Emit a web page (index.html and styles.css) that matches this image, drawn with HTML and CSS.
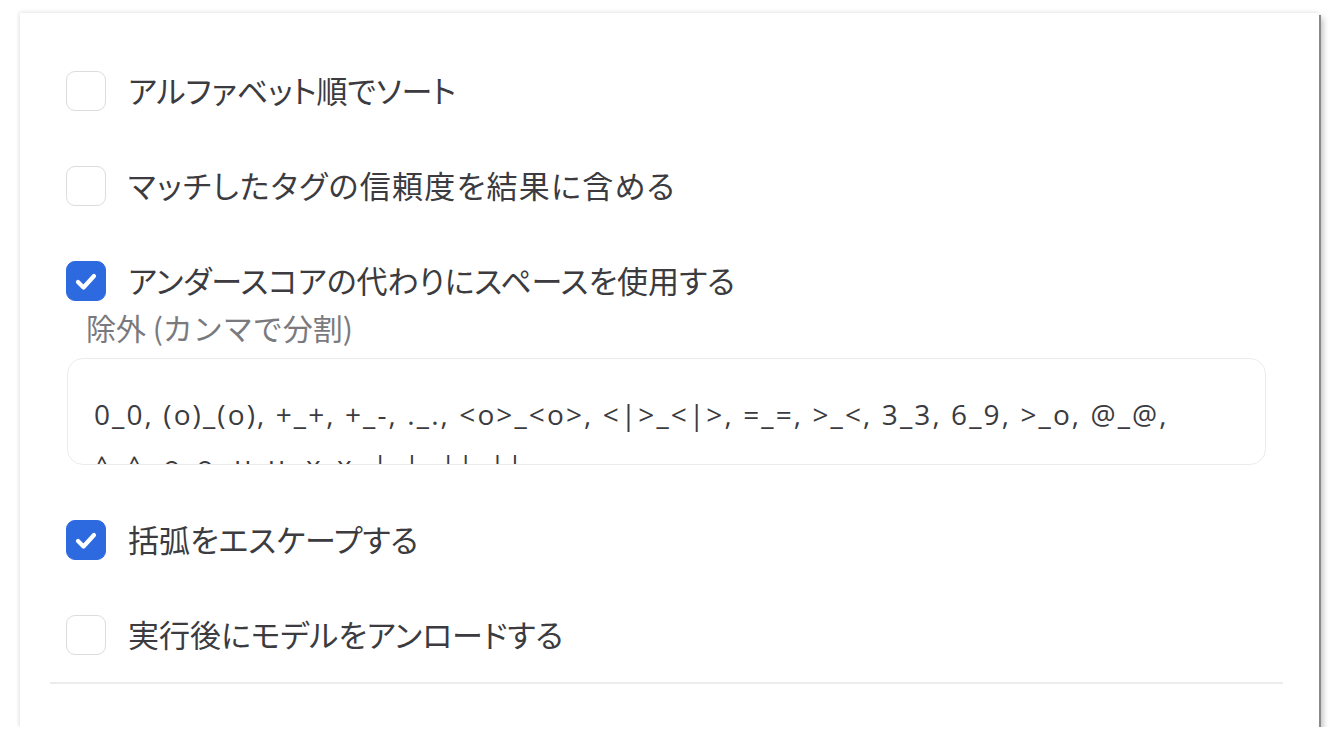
FILE: index.html
```html
<!DOCTYPE html>
<html lang="ja">
<head>
<meta charset="utf-8">
<title>設定</title>
<link rel="stylesheet" href="styles.css">
</head>
<body>
<div class="panel">
  <div class="options">
    <label class="row"><span class="box"></span><span class="text">アルファベット順でソート</span></label>
    <label class="row"><span class="box"></span><span class="text wide">マッチしたタグの信頼度を結果に含める</span></label>
    <div class="group">
      <label class="row"><span class="box checked"><svg viewBox="0 0 40 40" width="40" height="40"><path d="M12 21 L17.5 26.5 L28 15" fill="none" stroke="#fff" stroke-width="4.2" stroke-linecap="round" stroke-linejoin="round"/></svg></span><span class="text">アンダースコアの代わりにスペースを使用する</span></label>
      <div class="field-label">除外 (カンマで分割)</div>
      <div class="field"><div class="field-text">0_0, (o)_(o), +_+, +_-, ._., &lt;o&gt;_&lt;o&gt;, &lt;|&gt;_&lt;|&gt;, =_=, &gt;_&lt;, 3_3, 6_9, &gt;_o, @_@,<br>^_^, o_o, u_u, x_x, |_|, ||_||</div></div>
    </div>
    <label class="row"><span class="box checked"><svg viewBox="0 0 40 40" width="40" height="40"><path d="M12 21 L17.5 26.5 L28 15" fill="none" stroke="#fff" stroke-width="4.2" stroke-linecap="round" stroke-linejoin="round"/></svg></span><span class="text">括弧をエスケープする</span></label>
    <label class="row"><span class="box"></span><span class="text">実行後にモデルをアンロードする</span></label>
  </div>
  <div class="divider"></div>
</div>
</body>
</html>
```
FILE: styles.css
```css
html, body {
  margin: 0;
  background: #ffffff;
}
body {
  padding: 13px 0 0 20px;
  font-family: "Noto Sans CJK JP", "Noto Sans", sans-serif;
}
.panel {
  width: 1299px;
  height: 714px;
  background: #ffffff;
  box-sizing: border-box;
  box-shadow: 2px 2px 0 #8a8a8a, 4px 5px 6px rgba(0,0,0,0.25), -1px -1px 4px rgba(0,0,0,0.10);
  padding: 58px 0 0 46px;
  display: flex;
  flex-direction: column;
}
.options {
  display: flex;
  flex-direction: column;
  gap: 55px;
}
.group {
  display: flex;
  flex-direction: column;
}
.row {
  display: flex;
  align-items: center;
  gap: 22px;
  height: 40px;
}
.box {
  width: 40px;
  height: 40px;
  box-sizing: border-box;
  border: 1.5px solid #dcdcdc;
  border-radius: 9px;
  background: #fff;
  flex: none;
}
.box.checked {
  background: #2d6ae0;
  border-color: #2d6ae0;
  position: relative;
}
.box.checked svg {
  position: absolute;
  left: -1.5px;
  top: -1.5px;
}
.text {
  font-size: 31px;
  color: #3b3b40;
  font-feature-settings: "palt";
  line-height: 40px;
  white-space: nowrap;
  position: relative;
  top: -1px;
}
.text.wide {
  letter-spacing: 1.3px;
}
.field-label {
  margin: 7px 0 0 20px;
  font-size: 30px;
  line-height: 38px;
  color: #7a7a7e;
}
.field {
  margin: 12px 0 0 1px;
  width: 1199px;
  height: 107px;
  box-sizing: border-box;
  border: 1.5px solid #ececee;
  border-radius: 16px;
  padding: 30px 0 0 26px;
  overflow: hidden;
}
.field-text {
  font-family: "Open Sans", "Noto Sans", sans-serif;
  font-size: 28px;
  letter-spacing: 2.1px;
  line-height: 51px;
  color: #3b3b40;
  white-space: nowrap;
}
.divider {
  margin: 27px 0 0 -16px;
  width: 1233px;
  height: 1.5px;
  background: #ececee;
}
```
